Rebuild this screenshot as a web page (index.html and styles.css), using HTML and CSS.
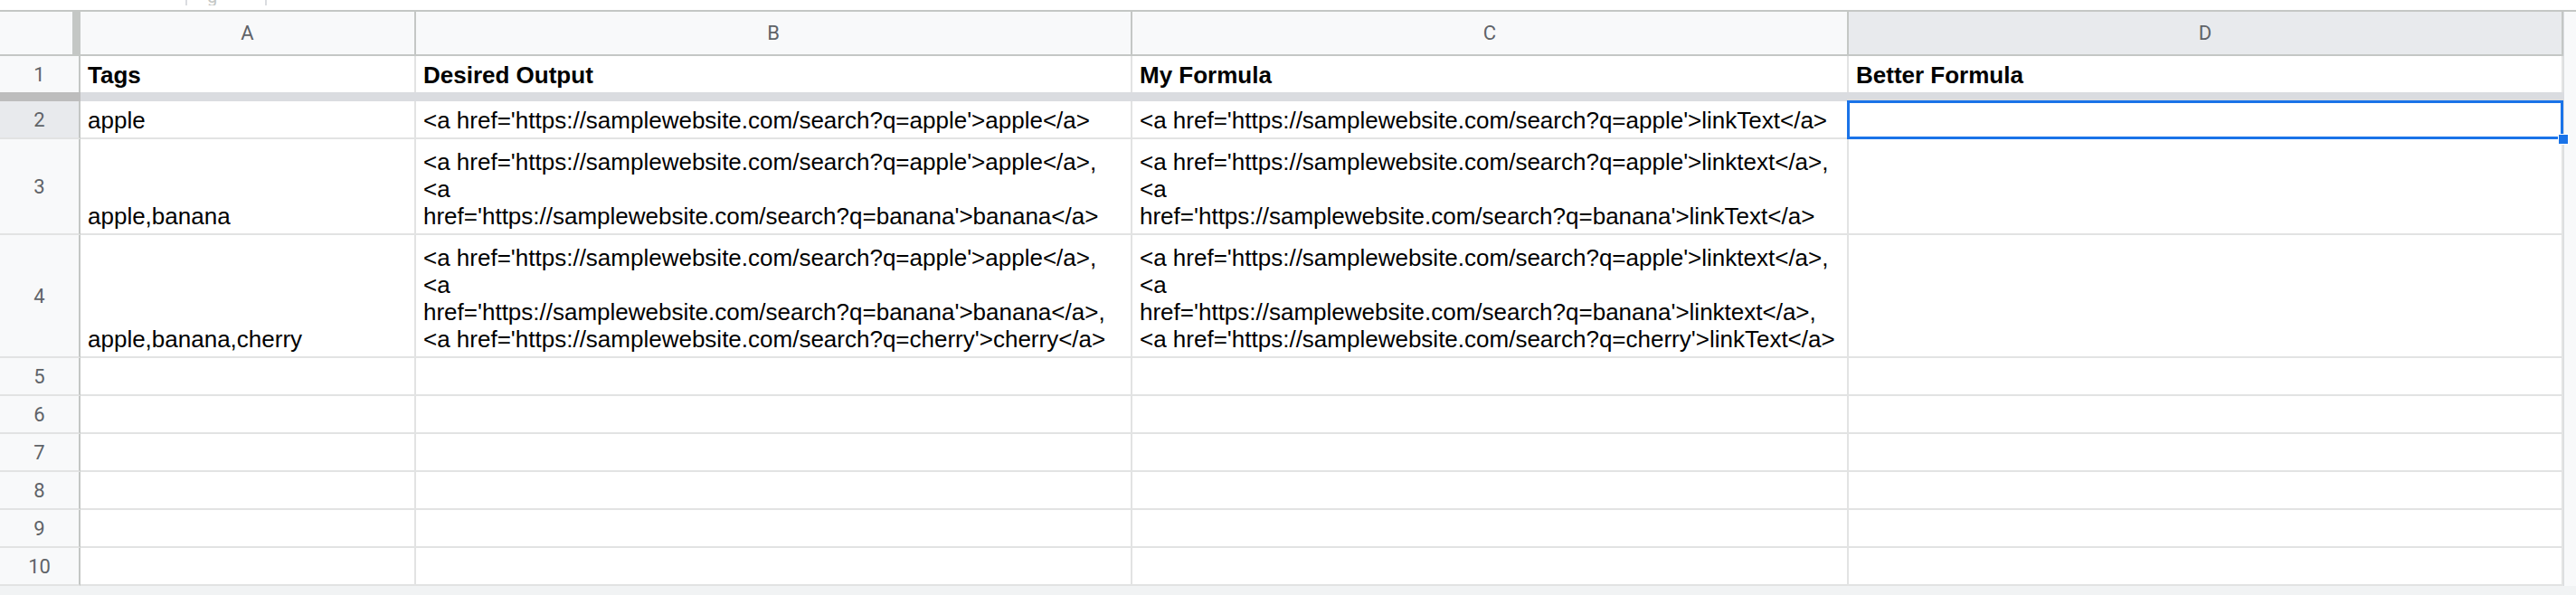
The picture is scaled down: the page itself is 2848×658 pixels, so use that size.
FILE: index.html
```html
<!DOCTYPE html>
<html lang="en">
<head>
  <meta charset="UTF-8" />
  <title>Sheet1</title>
  <link rel="stylesheet" href="styles.css">
</head>
<body>

  <div class="topbar">
    <div class="tab"><span>g</span></div>
  </div>

  <div class="sheet">
    <div class="grid">
      <div class="row head">
        <div class="corner"></div>
        <div class="col">A</div>
        <div class="col">B</div>
        <div class="col">C</div>
        <div class="col active">D</div>
      </div>

      <div class="row r1">
        <div class="num">1</div>
        <div class="cell bold">Tags</div>
        <div class="cell bold">Desired Output</div>
        <div class="cell bold">My Formula</div>
        <div class="cell bold">Better Formula</div>
      </div>

      <div class="freeze">
        <div class="freeze-num"></div>
        <div class="freeze-cells"></div>
      </div>

      <div class="row r2">
        <div class="num active">2</div>
        <div class="cell">apple</div>
        <div class="cell">&lt;a href='https://samplewebsite.com/search?q=apple'&gt;apple&lt;/a&gt;</div>
        <div class="cell">&lt;a href='https://samplewebsite.com/search?q=apple'&gt;linkText&lt;/a&gt;</div>
        <div class="cell selected"><div class="handle"></div></div>
      </div>

      <div class="row r3">
        <div class="num">3</div>
        <div class="cell">apple,banana</div>
        <div class="cell">&lt;a href='https://samplewebsite.com/search?q=apple'&gt;apple&lt;/a&gt;,<br>&lt;a<br>href='https://samplewebsite.com/search?q=banana'&gt;banana&lt;/a&gt;</div>
        <div class="cell">&lt;a href='https://samplewebsite.com/search?q=apple'&gt;linktext&lt;/a&gt;,<br>&lt;a<br>href='https://samplewebsite.com/search?q=banana'&gt;linkText&lt;/a&gt;</div>
        <div class="cell"></div>
      </div>

      <div class="row r4">
        <div class="num">4</div>
        <div class="cell">apple,banana,cherry</div>
        <div class="cell">&lt;a href='https://samplewebsite.com/search?q=apple'&gt;apple&lt;/a&gt;,<br>&lt;a<br>href='https://samplewebsite.com/search?q=banana'&gt;banana&lt;/a&gt;,<br>&lt;a href='https://samplewebsite.com/search?q=cherry'&gt;cherry&lt;/a&gt;</div>
        <div class="cell">&lt;a href='https://samplewebsite.com/search?q=apple'&gt;linktext&lt;/a&gt;,<br>&lt;a<br>href='https://samplewebsite.com/search?q=banana'&gt;linktext&lt;/a&gt;,<br>&lt;a href='https://samplewebsite.com/search?q=cherry'&gt;linkText&lt;/a&gt;</div>
        <div class="cell"></div>
      </div>

      <div class="row"><div class="num">5</div><div class="cell"></div><div class="cell"></div><div class="cell"></div><div class="cell"></div></div>
      <div class="row"><div class="num">6</div><div class="cell"></div><div class="cell"></div><div class="cell"></div><div class="cell"></div></div>
      <div class="row"><div class="num">7</div><div class="cell"></div><div class="cell"></div><div class="cell"></div><div class="cell"></div></div>
      <div class="row"><div class="num">8</div><div class="cell"></div><div class="cell"></div><div class="cell"></div><div class="cell"></div></div>
      <div class="row"><div class="num">9</div><div class="cell"></div><div class="cell"></div><div class="cell"></div><div class="cell"></div></div>
      <div class="row"><div class="num">10</div><div class="cell"></div><div class="cell"></div><div class="cell"></div><div class="cell"></div></div>
    </div>
    <div class="gutter"></div>
  </div>

  <div class="bottom"></div>

</body>
</html>
```

FILE: styles.css
```css
body {
  margin: 0;
  background-color: #ffffff;
  font-family: "Liberation Sans", Arial, sans-serif;
  color: #000;
}
.topbar {
  height: 11px;
  border-bottom: 2px solid #c4c7c5;
  overflow: hidden;
}
.tab {
  margin-left: 205px;
  width: 86px;
  height: 6px;
  border-left: 2px solid #dadce0;
  border-right: 2px solid #dadce0;
  overflow: hidden;
}
.tab span {
  display: block;
  margin: -16px 0 0 22px;
  font-family: Roboto, sans-serif;
  font-size: 20px;
  color: #c4c7c5;
}
.sheet {
  display: flex;
}
.grid {
  width: 2834px;
}
.gutter {
  width: 13px;
  background-color: #f8f9fa;
  border-left: 1px solid #dadce0;
}
.row {
  display: grid;
  grid-template-columns: 89px 371px 792px 792px 790px;
  height: 42px;
}
.row > div {
  box-sizing: border-box;
  border-right: 2px solid #e2e3e3;
  border-bottom: 2px solid #e2e3e3;
}
.row.head {
  height: 49px;
}
.row.head > div {
  border-right-color: #c4c7c5;
  border-bottom-color: #c4c7c5;
}
.row.r1 { height: 40px; }
.row.r1 > div { border-bottom: none; }
.row.r3 { height: 106px; }
.row.r4 { height: 136px; }

.corner {
  background-color: #f8f9fa;
  border-right: 9px solid #c4c7c5 !important;
}
.col {
  background-color: #f8f9fa;
  color: #5f6368;
  font-family: Roboto, sans-serif;
  font-size: 22px;
  display: flex;
  align-items: center;
  justify-content: center;
}
.col.active, .num.active {
  background-color: #e8eaed;
}
.num {
  background-color: #f8f9fa;
  color: #5f6368;
  font-family: Roboto, sans-serif;
  font-size: 22px;
  display: flex;
  align-items: center;
  justify-content: center;
  border-right-color: #c4c7c5 !important;
}
.cell {
  display: flex;
  align-items: flex-end;
  padding: 0 8px 4px;
  font-size: 26px;
  line-height: 30px;
  white-space: nowrap;
  overflow: hidden;
}
.bold {
  font-weight: bold;
}
.cell.selected {
  position: relative;
  overflow: visible;
}
.cell.selected::before {
  content: "";
  position: absolute;
  left: -2px;
  top: -1px;
  right: -2px;
  bottom: -2px;
  border: 3px solid #1a73e8;
}
.handle {
  position: absolute;
  right: -8px;
  bottom: -8px;
  width: 10px;
  height: 10px;
  background-color: #1a73e8;
  border: 1px solid #ffffff;
  z-index: 2;
}
.freeze {
  display: flex;
  height: 10px;
}
.freeze-num {
  width: 89px;
  background-color: #bdbdbd;
}
.freeze-cells {
  flex: 1;
  background-color: #dadce0;
}
.bottom {
  height: 10px;
  background-color: #f1f3f4;
}
```
